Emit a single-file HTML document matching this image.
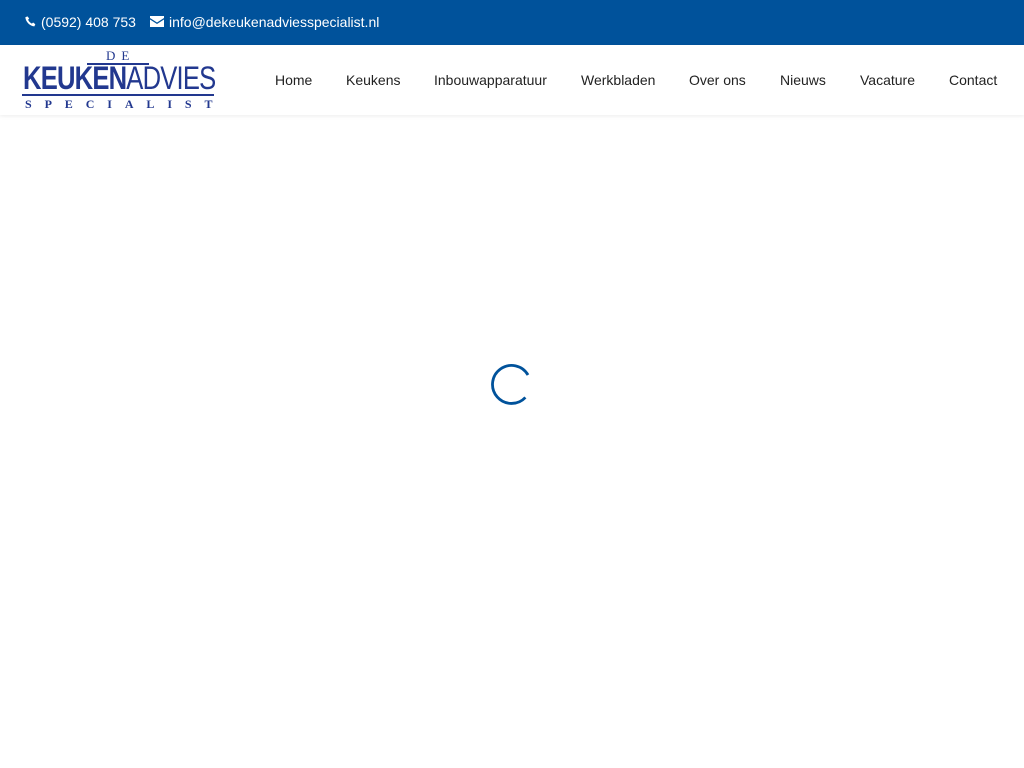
<!DOCTYPE html>
<html><head><meta charset="utf-8"><style>
*{margin:0;padding:0;box-sizing:border-box}
body{width:1024px;height:768px;background:#fff;font-family:"Liberation Sans",sans-serif;position:relative;overflow:hidden}
.top{position:absolute;left:0;top:0;width:1024px;height:45px;background:#00529b;color:#fff;font-size:14px}
.top span{position:absolute;top:14px;white-space:nowrap}
.hdr{position:absolute;left:0;top:45px;width:1024px;height:70px;background:#fff;box-shadow:0 1px 4px rgba(0,0,0,.08)}
.nav a{position:absolute;top:27px;font-size:14px;color:#222;text-decoration:none;white-space:nowrap}
.logo{position:absolute;color:#22388f;font-family:"Liberation Serif",serif;white-space:nowrap}
</style></head><body>
<div class="top">
<svg style="position:absolute;left:25px;top:16px" width="11" height="11" viewBox="0 0 16 16"><path fill="#fff" d="M3.6 0.5l2.5 3.2-1.6 1.8c.9 2.2 3.1 4.5 5.5 5.6l1.8-1.6 3.2 2.5-1.4 3.1C7.3 15 1 8.7 0.5 1.9z"/></svg>
<span style="left:41px">(0592) 408 753</span>
<svg style="position:absolute;left:150px;top:16px" width="14" height="11" viewBox="0 0 14 11"><path fill="#fff" d="M0 0h14v2L7 6.5 0 2z M0 3.5l7 4.5 7-4.5V11H0z"/></svg>
<span style="left:169px">info@dekeukenadviesspecialist.nl</span>
</div>
<div class="hdr">
<div class="logo" style="left:106px;top:3px;font-size:13px;letter-spacing:6px">DE</div>
<div style="position:absolute;left:87px;top:18px;width:62px;height:2px;background:#22388f"></div>
<div class="logo" style="left:23px;top:15px;font-family:'Liberation Sans',sans-serif;font-weight:bold;font-size:32px;letter-spacing:-1px;transform:scaleX(.8);transform-origin:left">KEUKEN<span style="font-weight:normal">ADVIES</span></div>
<div style="position:absolute;left:22px;top:49px;width:192px;height:2px;background:#22388f"></div>
<div class="logo" style="left:25px;top:52px;font-size:12px;font-weight:bold;letter-spacing:12.9px">SPECIALIST</div>
<div class="nav">
<a style="left:275px">Home</a><a style="left:346px">Keukens</a><a style="left:434px">Inbouwapparatuur</a><a style="left:581px">Werkbladen</a><a style="left:689px">Over ons</a><a style="left:780px">Nieuws</a><a style="left:860px">Vacature</a><a style="left:949px">Contact</a>
</div>
</div>
<svg style="position:absolute;left:490px;top:362px" width="44" height="44" viewBox="0 0 44 44"><path d="M38 13A19 19 0 1 0 35.4 35.4" fill="none" stroke="#00529b" stroke-width="2.8"/></svg>
</body></html>
